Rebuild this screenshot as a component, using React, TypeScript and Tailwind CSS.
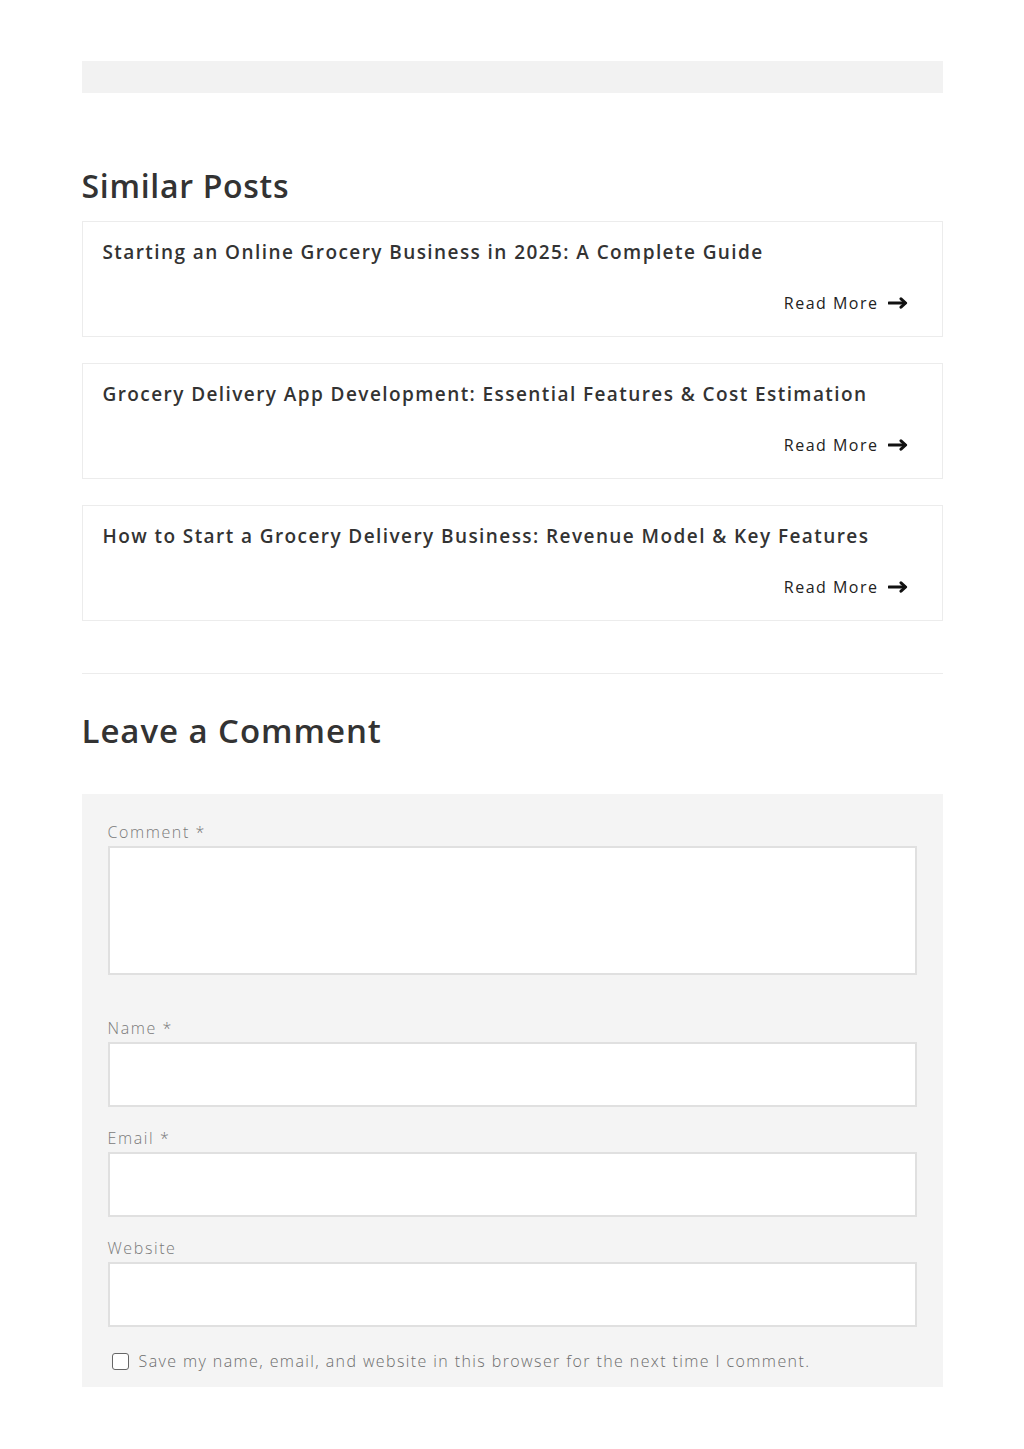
const posts = [
  "Starting an Online Grocery Business in 2025: A Complete Guide",
  "Grocery Delivery App Development: Essential Features & Cost Estimation",
  "How to Start a Grocery Delivery Business: Revenue Model & Key Features",
];

const font = { fontFamily: '"Open Sans", "Liberation Sans", sans-serif' };

// Long right arrow with a bold chevron head
function LongArrow() {
  return (
    <svg width="20" height="12" viewBox="0 0 20 12" fill="none" className="shrink-0">
      <path d="M1 6H17" stroke="#111" strokeWidth="3" strokeLinecap="round" />
      <path d="M13 1.8L17.6 6L13 10.2" stroke="#111" strokeWidth="3" strokeLinecap="round" strokeLinejoin="round" />
    </svg>
  );
}

function PostCard({ title }: { title: string }) {
  return (
    <article className="flex h-[116px] flex-col border border-[#ececec] bg-white px-5 pt-[16px]">
      <h3 className="text-[19px] font-semibold leading-[28px] tracking-[1.42px] text-[#333]">{title}</h3>
      <div className="mt-auto mb-[21px] flex items-center justify-end gap-[9px] pr-[14px] text-[16px] tracking-[1.5px] text-[#222]">
        <span>Read More</span>
        <LongArrow />
      </div>
    </article>
  );
}

function Field({ label, tall }: { label: string; tall?: boolean }) {
  return (
    <div className="flex flex-col">
      <label className="mb-[2px] text-[16px] font-light leading-[24px] tracking-[1.6px] text-[#7a7a7a]">{label}</label>
      <div className={`border-2 border-[#e0e0e0] bg-white ${tall ? "h-[129px]" : "h-[65px]"}`} />
    </div>
  );
}

export default function App() {
  return (
    <div className="min-h-[1449px] bg-white" style={font}>
      <div className="mx-auto w-[861px] pt-[61px] pb-[62px]">
        {/* Empty grey strip */}
        <div className="h-[32px] bg-[#f2f2f2]" />

        {/* ── Similar Posts ─────────────────────────────── */}
        <h2 className="mt-[67px] mb-[9px] text-[32px] font-semibold leading-[52px] tracking-[0.7px] text-[#333]">
          Similar Posts
        </h2>
        <div className="flex flex-col gap-[26px]">
          {posts.map((p) => (
            <PostCard key={p} title={p} />
          ))}
        </div>

        <hr className="mt-[52px] border-t border-[#ececec]" />

        {/* ── Leave a Comment ───────────────────────────── */}
        <h2 className="mt-[33px] text-[33px] font-semibold leading-[48px] tracking-[0.95px] text-[#333]">
          Leave a Comment
        </h2>

        <form className="mt-[39px] bg-[#f4f4f4] px-[26px] pt-[26px] pb-[14px]">
          <Field label="Comment *" tall />
          <div className="mt-[41px] flex flex-col gap-[19px]">
            <Field label="Name *" />
            <Field label="Email *" />
            <Field label="Website" />
          </div>
          <label className="mt-[22px] flex items-center gap-[10px] pl-[4px] text-[16px] font-light leading-[24px] tracking-[1.4px] text-[#6d6d6d]">
            <span className="h-[17px] w-[17px] shrink-0 rounded-[3px] border-[1.5px] border-[#666] bg-white" />
            Save my name, email, and website in this browser for the next time I comment.
          </label>
        </form>
      </div>
    </div>
  );
}
